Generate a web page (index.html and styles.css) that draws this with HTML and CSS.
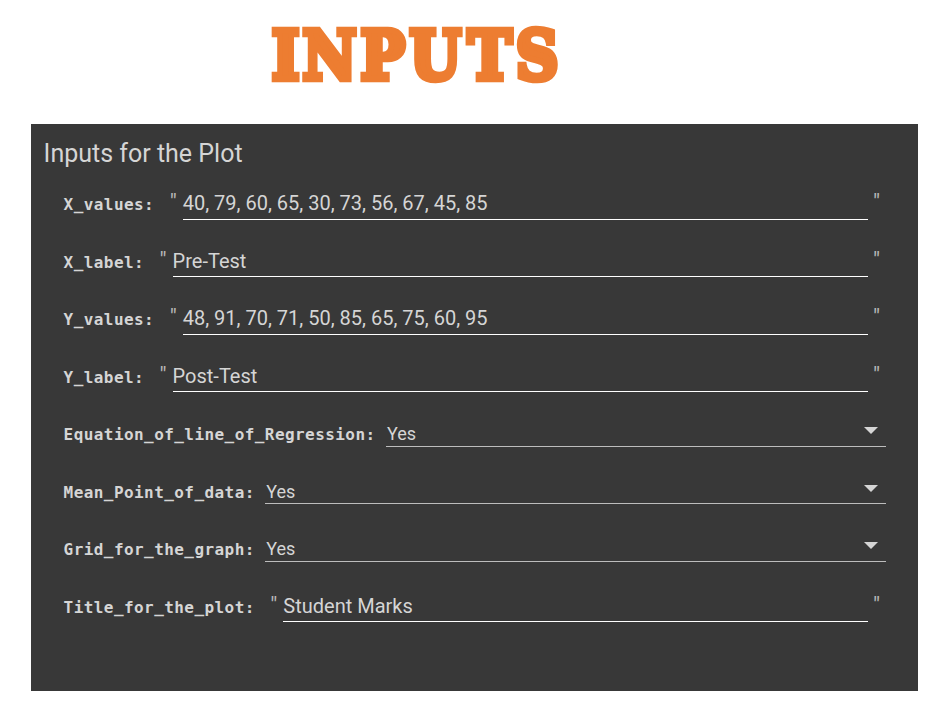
FILE: index.html
```html
<!DOCTYPE html>
<html lang="en">
<head>
<meta charset="utf-8">
<title>Inputs</title>
<link rel="stylesheet" href="styles.css">
</head>
<body>
<h1 class="title">
<svg width="300" height="80" viewBox="0 0 300 80" role="img" aria-label="INPUTS"><g transform="scale(.87 1)"><text class="title-text" y="63" x="6.5 42 108.5 165 232 287">INPUTS</text></g></svg>
</h1>
<main class="panel">
<h2 class="heading">Inputs for the Plot</h2>
<div class="row"><span class="label">X_values:</span><span class="quote">"</span><span class="input">40, 79, 60, 65, 30, 73, 56, 67, 45, 85</span><span class="quote end">"</span></div>
<div class="row"><span class="label">X_label:</span><span class="quote">"</span><span class="input">Pre-Test</span><span class="quote end">"</span></div>
<div class="row"><span class="label">Y_values:</span><span class="quote">"</span><span class="input">48, 91, 70, 71, 50, 85, 65, 75, 60, 95</span><span class="quote end">"</span></div>
<div class="row"><span class="label">Y_label:</span><span class="quote">"</span><span class="input">Post-Test</span><span class="quote end">"</span></div>
<div class="row"><span class="label">Equation_of_line_of_Regression:</span><span class="select">Yes<svg class="arrow" width="14" height="7" viewBox="0 0 14 7"><path d="M0 0h14L7 7z"/></svg></span></div>
<div class="row"><span class="label">Mean_Point_of_data:</span><span class="select">Yes<svg class="arrow" width="14" height="7" viewBox="0 0 14 7"><path d="M0 0h14L7 7z"/></svg></span></div>
<div class="row"><span class="label">Grid_for_the_graph:</span><span class="select">Yes<svg class="arrow" width="14" height="7" viewBox="0 0 14 7"><path d="M0 0h14L7 7z"/></svg></span></div>
<div class="row"><span class="label">Title_for_the_plot:</span><span class="quote">"</span><span class="input">Student Marks</span><span class="quote end">"</span></div>
</main>
</body>
</html>
```
FILE: styles.css
```css
* { box-sizing: border-box; }
body { margin: 0; background: #fff; font-family: Roboto, sans-serif; }
.title { margin: 0; height: 124px; padding: 16px 0 0 266px; line-height: 0; }
.title svg { overflow: visible; }
.title-text {
  font: bold 68px "DejaVu Serif", serif;
  fill: #ed7d31;
  stroke: #ed7d31;
  stroke-width: 6.5px;
}
.panel {
  width: 887px;
  height: 567px;
  margin-left: 31px;
  padding: 0 32px 0 32.6px;
  background: #383838;
  color: #d5d5d5;
}
.heading { margin: 0 0 0 -20px; height: 50.8px; padding-top: 15px; font-size: 25px; font-weight: 400; line-height: 30px; }
.row { display: flex; align-items: flex-start; height: 57.5px; white-space: nowrap; }
.label {
  flex: none;
  padding-top: 19.4px;
  font: bold 16px/22px "DejaVu Sans Mono", monospace;
  letter-spacing: .43px;
}
.quote { flex: none; width: 28.5px; padding: 15.4px 0 0 15.5px; font-size: 22px; line-height: 24px; color: #b8b8b8; }
.quote.end { width: 18px; padding-left: 5px; }
.input { flex: 1; height: 45px; padding-top: 16.7px; border-bottom: 1px solid #fff; font-size: 20px; line-height: 24px; }
.select {
  flex: 1;
  display: flex;
  justify-content: space-between;
  align-items: flex-start;
  height: 42px;
  margin-left: 10px;
  padding: 17.5px 8px 0 1.5px;
  border-bottom: 1px solid #bdbdbd;
  font-size: 18px;
  line-height: 24px;
}
.arrow { margin-top: 5px; fill: #d5d5d5; }
```
